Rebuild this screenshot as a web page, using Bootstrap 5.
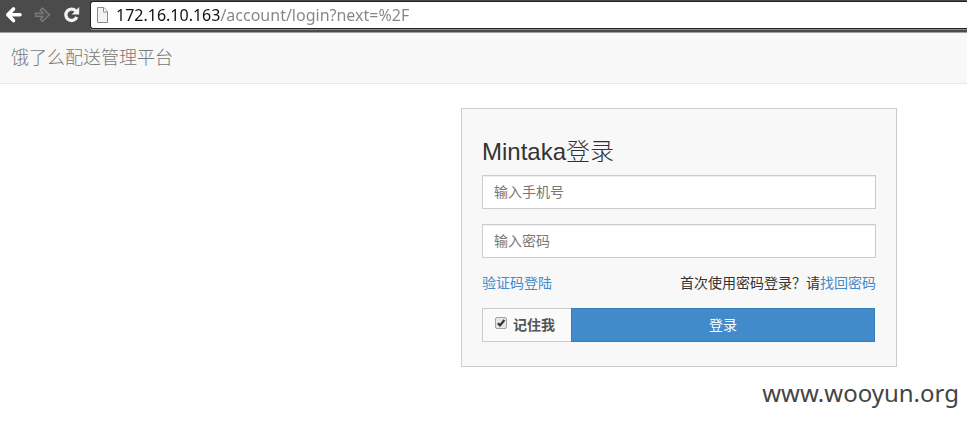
<!DOCTYPE html>
<html lang="zh-CN">
<head>
<meta charset="utf-8">
<meta name="viewport" content="width=device-width, initial-scale=1">
<title>Mintaka登录</title>
<link rel="stylesheet" href="https://cdn.jsdelivr.net/npm/bootstrap@5.3.0/dist/css/bootstrap.min.css">
<style>
  body { font-family: "Liberation Sans", "Noto Sans CJK SC", sans-serif; font-size: 14px; line-height: 20px; color: #333; }
  .browser-bar { background: #4b4b4b; border-bottom: 1px solid #a0a0a0; height: 33px; padding: 1px 0 4px 3px; }
  .tool-btn { width: 23px; height: 28px; margin-right: 6px; padding: 0; border: 0; background: none; line-height: 1; }
  .address { height: 28px; background: #fff; border: 1px solid #222; border-right: 0; border-radius: 3px 0 0 3px; box-shadow: 0 1px 0 #8c8c8c; padding-left: 6px; }
  .address-input { font-family: "Noto Sans", sans-serif; font-size: 16px; line-height: 24px; border: 0; outline: 0; padding: 0; color: transparent; background: linear-gradient(90deg, #111 105px, #858585 105px); -webkit-background-clip: text; background-clip: text; }
  .site-nav { background: #f8f8f8; border-bottom: 1px solid #e7e7e7; min-height: 51px; padding: 0 11px; }
  .site-nav .navbar-brand { font-size: 18px; line-height: 20px; color: #777; font-weight: 300; padding: 0; }
  .login-card { width: 436px; max-width: 100%; margin: 24px 70px 0 auto; padding: 30px 20px 24px; border: 1px solid #ccc; border-radius: 0; background: #f8f8f8; }
  .login-title { font-size: 24px; line-height: 26px; font-weight: 300; margin-bottom: 10px; }
  .login-card .form-control { height: 34px; padding: 6px 11px; font-size: 14px; line-height: 20px; border-color: #ccc; border-radius: 0; margin-bottom: 15px; box-shadow: inset 0 1px 1px rgba(0,0,0,.075); }
  .login-card .form-control::placeholder { color: #777; }
  .login-card a { color: #428bca; }
  .helper { margin-bottom: 15px; }
  .remember { width: 89px; height: 34px; border: 1px solid #ccc; border-right: 0; background: #fafafa; padding-left: 12px; color: #555; }
  .remember-box { appearance: none; width: 12px; height: 12px; margin: 0 6px 4px 0; border: 1px solid #a3a3a3; border-radius: 2px; background: #e6e6e6 center no-repeat; }
  .remember-box:checked { background-image: url("data:image/svg+xml,%3Csvg xmlns='http://www.w3.org/2000/svg' viewBox='0 0 10 10'%3E%3Cpath d='M1.800 5.200 4 7.400 8.400 2' fill='none' stroke='%23333' stroke-width='2.200'/%3E%3C/svg%3E"); }
  .login-btn { height: 34px; padding: 6px 12px; font-size: 14px; line-height: 20px; color: #fff; background: #428bca; border: 1px solid #357ebd; border-radius: 0; margin-right: 1px; }
  .site-mark { font-family: "Noto Sans", sans-serif; font-size: 24px; line-height: 32px; color: #444; padding: 10px 8px 0; }
</style>
<script src="https://cdn.jsdelivr.net/npm/bootstrap@5.3.0/dist/js/bootstrap.bundle.min.js"></script>
</head>
<body class="bg-white">
<header class="browser-bar d-flex">
  <button class="tool-btn" type="button" aria-label="后退"><svg width="23" height="28" viewBox="0 0 23 28"><path d="M10.500 8 4.800 13.800l5.700 5.800M5.500 13.800H17" fill="none" stroke="#fff" stroke-width="3.600" stroke-linecap="round" stroke-linejoin="round"/></svg></button>
  <button class="tool-btn" type="button" aria-label="前进" disabled><svg width="23" height="28" viewBox="0 0 23 28"><path d="M3.500 12.200h7.500L8.300 9.300l2.200-2.300 7 6.800-7 6.800-2.200-2.300 2.700-2.900H3.500z" fill="#545454" stroke="#7c7c7c" stroke-width="1.300" stroke-linejoin="round"/></svg></button>
  <button class="tool-btn" type="button" aria-label="重新加载"><svg width="23" height="28" viewBox="0 0 23 28"><path d="M14.800 10A5.700 5.700 0 1 0 15.800 16" fill="none" stroke="#f2f2f2" stroke-width="3.300"/><path d="M18.200 6v7.600h-7.600z" fill="#f2f2f2"/></svg></button>
  <div class="address d-flex align-items-center flex-grow-1">
    <svg class="me-2" width="11" height="16" viewBox="0 0 11 16" aria-hidden="true"><path d="M.5.500H7L10.500 4.500v11H.5z" fill="#f3f3f3" stroke="#8c8c8c"/><path d="M6.500.500v4.500h4" fill="#fff" stroke="#8c8c8c"/></svg>
    <input class="address-input flex-grow-1" type="text" aria-label="地址" value="172.16.10.163/account/login?next=%2F">
  </div>
</header>
<nav class="navbar site-nav"><a class="navbar-brand" href="#">饿了么配送管理平台</a></nav>
<main>
  <form class="card login-card">
    <h1 class="login-title">Mintaka登录</h1>
    <input class="form-control" type="tel" placeholder="输入手机号" aria-label="手机号">
    <input class="form-control" type="password" placeholder="输入密码" aria-label="密码">
    <div class="helper d-flex justify-content-between">
      <a class="text-decoration-none" href="#">验证码登陆</a>
      <span>首次使用密码登录？请<a class="text-decoration-none" href="#">找回密码</a></span>
    </div>
    <div class="d-flex">
      <label class="remember d-flex align-items-center fw-bold" for="remember"><input class="remember-box" id="remember" type="checkbox" checked>记住我</label>
      <button class="login-btn flex-grow-1" type="submit">登录</button>
    </div>
  </form>
</main>
<footer class="site-mark text-end">www.wooyun.org</footer>
</body>
</html>
